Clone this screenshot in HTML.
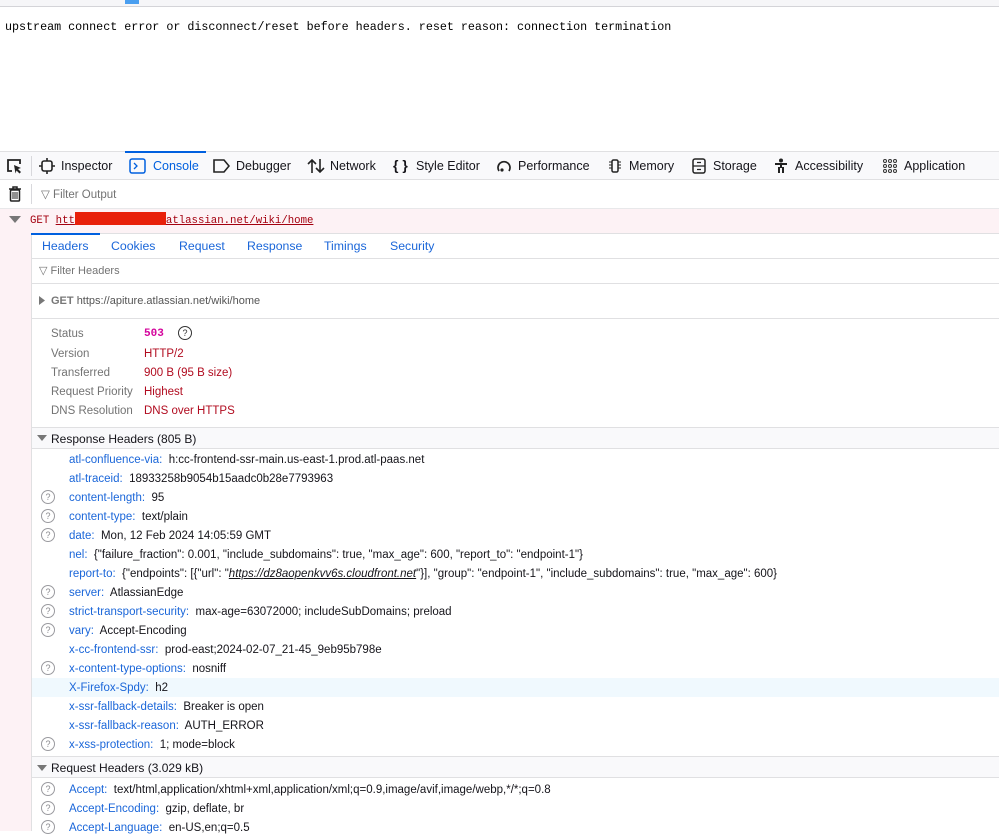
<!DOCTYPE html>
<html><head><meta charset="utf-8"><style>
*{margin:0;padding:0;box-sizing:border-box}
body{width:999px;height:831px;overflow:hidden;background:#fff;font-family:"Liberation Sans",sans-serif;font-size:11.5px;color:#15141a;position:relative}
.a{position:absolute;white-space:nowrap;line-height:16px}
.mono{font-family:"Liberation Mono",monospace}
.k{color:#1a66d9}
.hl{position:absolute;left:31px;right:0;height:1px;background:#e0e0e2}
.q{position:absolute;left:41px;width:14px;height:14px;border:1px solid #9a9a9f;border-radius:50%;font-size:9px;line-height:12px;text-align:center;color:#8a8a8f}
.lab{color:#737373}
.red{color:#b10b1f}
.tb{color:#15141a;font-size:12.5px}
</style></head><body>
<div style="position:absolute;left:0;top:0;width:999px;height:7px;background:#f6f6f8;border-bottom:1px solid #d4d4d8"></div>
<div style="position:absolute;left:125px;top:0;width:14px;height:4px;background:#4a9ff0"></div>
<div class="a mono" style="left:5px;top:19px;font-size:11.7px;color:#000">upstream connect error or disconnect/reset before headers. reset reason: connection termination</div>

<!-- toolbar -->
<div style="position:absolute;left:0;top:151px;width:999px;height:29px;background:#f9f9fb;border-top:1px solid #e0e0e2;border-bottom:1px solid #e0e0e2"></div>
<div style="position:absolute;left:125px;top:151px;width:81px;height:2px;background:#0060df"></div>
<svg style="position:absolute;left:5px;top:157px" width="18" height="18" viewBox="0 0 18 18"><path d="M7 14H3V3h12v4" fill="none" stroke="#222" stroke-width="1.8"/><path d="M9 8l7 3-3 1 3 3-1.5 1.5-3-3-1 3z" fill="#222"/></svg>
<div style="position:absolute;left:31px;top:156px;width:1px;height:20px;background:#d8d8dc"></div>
<svg style="position:absolute;left:39px;top:158px" width="16" height="16" viewBox="0 0 16 16"><rect x="3" y="3" width="10" height="10" rx="2" fill="none" stroke="#222" stroke-width="1.6"/><path d="M8 0v3M8 13v3M0 8h3M13 8h3" stroke="#222" stroke-width="1.6"/></svg>
<div class="a tb" style="left:61px;top:158px">Inspector</div>
<svg style="position:absolute;left:129px;top:158px" width="17" height="16" viewBox="0 0 17 16"><rect x="1" y="1" width="15" height="14" rx="2" fill="none" stroke="#0060df" stroke-width="1.5"/><path d="M5 5l3 3-3 3" fill="none" stroke="#0060df" stroke-width="1.3"/></svg>
<div class="a tb" style="left:153px;top:158px;color:#0060df">Console</div>
<svg style="position:absolute;left:213px;top:159px" width="17" height="14" viewBox="0 0 17 14"><path d="M1 1h10l5 6-5 6H1z" fill="none" stroke="#222" stroke-width="1.6"/></svg>
<div class="a tb" style="left:236px;top:158px">Debugger</div>
<svg style="position:absolute;left:307px;top:158px" width="18" height="16" viewBox="0 0 18 16"><path d="M5 15V2M1 6l4-4 4 4M13 1v13M9 10l4 4 4-4" fill="none" stroke="#222" stroke-width="1.6"/></svg>
<div class="a tb" style="left:330px;top:158px">Network</div>
<div class="a tb" style="left:393px;top:157px;font-size:14px;font-weight:bold">{ }</div>
<div class="a tb" style="left:416px;top:158px">Style Editor</div>
<svg style="position:absolute;left:496px;top:158px" width="16" height="16" viewBox="0 0 16 16"><path d="M3 13A6 6 0 1 1 13 13" fill="none" stroke="#222" stroke-width="1.7"/><circle cx="6" cy="12" r="1.6" fill="#222"/></svg>
<div class="a tb" style="left:518px;top:158px">Performance</div>
<svg style="position:absolute;left:607px;top:158px" width="16" height="16" viewBox="0 0 16 16"><rect x="5" y="2" width="6" height="12" rx="1.5" fill="none" stroke="#222" stroke-width="1.5"/><path d="M2 4h3M2 7h3M2 10h3M11 4h3M11 7h3M11 10h3" stroke="#222"/></svg>
<div class="a tb" style="left:629px;top:158px">Memory</div>
<svg style="position:absolute;left:692px;top:158px" width="14" height="16" viewBox="0 0 14 16"><rect x="1" y="1" width="12" height="14" rx="2" fill="none" stroke="#222" stroke-width="1.5"/><path d="M1 8h12M5 4.5h4M5 11.5h4" stroke="#222" stroke-width="1.3"/></svg>
<div class="a tb" style="left:713px;top:158px">Storage</div>
<svg style="position:absolute;left:773px;top:158px" width="16" height="16" viewBox="0 0 16 16"><circle cx="8" cy="2.5" r="2" fill="#222"/><path d="M2 6h12M8 6v4M6 9v6M10 9v6" stroke="#222" stroke-width="2"/></svg>
<div class="a tb" style="left:795px;top:158px">Accessibility</div>
<svg style="position:absolute;left:882px;top:158px" width="16" height="16" viewBox="0 0 16 16" fill="none" stroke="#333" stroke-width="1"><circle cx="3" cy="3" r="1.5"/><circle cx="8" cy="3" r="1.5"/><circle cx="13" cy="3" r="1.5"/><circle cx="3" cy="8" r="1.5"/><circle cx="8" cy="8" r="1.5"/><circle cx="13" cy="8" r="1.5"/><circle cx="3" cy="13" r="1.5"/><circle cx="8" cy="13" r="1.5"/><circle cx="13" cy="13" r="1.5"/></svg>
<div class="a tb" style="left:904px;top:158px">Application</div>

<!-- filter output -->
<svg style="position:absolute;left:8px;top:186px" width="14" height="16" viewBox="0 0 14 16"><path d="M1 3h12M5 3V1h4v2" fill="none" stroke="#222" stroke-width="1.5"/><rect x="2.5" y="4" width="9" height="11" rx="1" fill="none" stroke="#222" stroke-width="1.5"/><path d="M5 6v7M7 6v7M9 6v7" stroke="#222"/></svg>
<div style="position:absolute;left:31px;top:184px;width:1px;height:20px;background:#d8d8dc"></div>
<div class="a" style="left:41px;top:187px;color:#737373">▽ Filter Output</div>
<div style="position:absolute;left:0;top:208px;width:999px;height:1px;background:#e8e8ea"></div>

<!-- left gutter -->
<div style="position:absolute;left:0;top:209px;width:31px;height:622px;background:#fdf2f5"></div>
<div style="position:absolute;left:31px;top:209px;width:968px;height:24px;background:#fdf2f5"></div>
<svg style="position:absolute;left:9px;top:216px" width="12" height="7" viewBox="0 0 12 7"><path d="M0 0h12L6 7z" fill="#777"/></svg>
<div class="a mono" style="left:30px;top:212px;font-size:10.7px;color:#a4000f">GET <span style="text-decoration:underline">htt<span style="display:inline-block;width:91px;height:13px;vertical-align:-2px;background:#e8200a"></span>atlassian.net/wiki/home</span></div>

<!-- tabs -->
<div style="position:absolute;left:31px;top:233px;width:1px;height:598px;background:#e0e0e2"></div>
<div class="hl" style="top:233px"></div>
<div style="position:absolute;left:31px;top:233px;width:69px;height:2px;background:#0060df"></div>
<div class="a k" style="left:42px;top:238px;font-size:12.3px">Headers</div>
<div class="a k" style="left:111px;top:238px;font-size:12.3px">Cookies</div>
<div class="a k" style="left:179px;top:238px;font-size:12.3px">Request</div>
<div class="a k" style="left:247px;top:238px;font-size:12.3px">Response</div>
<div class="a k" style="left:324px;top:238px;font-size:12.3px">Timings</div>
<div class="a k" style="left:390px;top:238px;font-size:12.3px">Security</div>
<div class="hl" style="top:258px"></div>
<div class="a" style="left:39px;top:263px;color:#737373;font-size:11px">▽ Filter Headers</div>
<div class="hl" style="top:283px"></div>
<svg style="position:absolute;left:39px;top:296px" width="6" height="9" viewBox="0 0 6 9"><path d="M0 0l6 4.5L0 9z" fill="#777"/></svg>
<div class="a" style="left:51px;top:293px;font-size:11px"><b style="color:#777">GET</b> <span style="color:#555">https://apiture.atlassian.net/wiki/home</span></div>
<div class="hl" style="top:318px"></div>

<div class="a lab" style="left:51px;top:326px">Status</div><div class="a mono" style="left:144px;top:326px;color:#d3039b;font-weight:bold;font-size:11px">503</div>
<div class="q" style="left:178px;top:326px;border-color:#333;color:#333">?</div>
<div class="a lab" style="left:51px;top:346px">Version</div><div class="a red" style="left:144px;top:346px">HTTP/2</div>
<div class="a lab" style="left:51px;top:365px">Transferred</div><div class="a red" style="left:144px;top:365px">900 B (95 B size)</div>
<div class="a lab" style="left:51px;top:384px">Request Priority</div><div class="a red" style="left:144px;top:384px">Highest</div>
<div class="a lab" style="left:51px;top:403px">DNS Resolution</div><div class="a red" style="left:144px;top:403px">DNS over HTTPS</div>

<div class="hl" style="top:427px"></div>
<div style="position:absolute;left:32px;top:428px;width:967px;height:20px;background:#f9f9fb"></div>
<svg style="position:absolute;left:37px;top:435px" width="10" height="6" viewBox="0 0 10 6"><path d="M0 0h10L5 6z" fill="#777"/></svg>
<div class="a" style="left:51px;top:431px;font-size:12px">Response Headers (805 B)</div>
<div class="hl" style="top:448px"></div>

<div style="position:absolute;left:32px;top:678px;width:967px;height:19px;background:#f0f9fe"></div>

<div class="a" style="left:69px;top:452px"><span class="k">atl-confluence-via:</span>&nbsp; h:cc-frontend-ssr-main.us-east-1.prod.atl-paas.net</div>
<div class="a" style="left:69px;top:471px"><span class="k">atl-traceid:</span>&nbsp; 18933258b9054b15aadc0b28e7793963</div>
<div class="q" style="top:490px">?</div><div class="a" style="left:69px;top:490px"><span class="k">content-length:</span>&nbsp; 95</div>
<div class="q" style="top:509px">?</div><div class="a" style="left:69px;top:509px"><span class="k">content-type:</span>&nbsp; text/plain</div>
<div class="q" style="top:528px">?</div><div class="a" style="left:69px;top:528px"><span class="k">date:</span>&nbsp; Mon, 12 Feb 2024 14:05:59 GMT</div>
<div class="a" style="left:69px;top:547px"><span class="k">nel:</span>&nbsp; {"failure_fraction": 0.001, "include_subdomains": true, "max_age": 600, "report_to": "endpoint-1"}</div>
<div class="a" style="left:69px;top:566px"><span class="k">report-to:</span>&nbsp; {"endpoints": [{"url": "<i style="text-decoration:underline">https://dz8aopenkvv6s.cloudfront.net</i>"}], "group": "endpoint-1", "include_subdomains": true, "max_age": 600}</div>
<div class="q" style="top:585px">?</div><div class="a" style="left:69px;top:585px"><span class="k">server:</span>&nbsp; AtlassianEdge</div>
<div class="q" style="top:604px">?</div><div class="a" style="left:69px;top:604px"><span class="k">strict-transport-security:</span>&nbsp; max-age=63072000; includeSubDomains; preload</div>
<div class="q" style="top:623px">?</div><div class="a" style="left:69px;top:623px"><span class="k">vary:</span>&nbsp; Accept-Encoding</div>
<div class="a" style="left:69px;top:642px"><span class="k">x-cc-frontend-ssr:</span>&nbsp; prod-east;2024-02-07_21-45_9eb95b798e</div>
<div class="q" style="top:661px">?</div><div class="a" style="left:69px;top:661px"><span class="k">x-content-type-options:</span>&nbsp; nosniff</div>
<div class="a" style="left:69px;top:680px"><span class="k">X-Firefox-Spdy:</span>&nbsp; h2</div>
<div class="a" style="left:69px;top:699px"><span class="k">x-ssr-fallback-details:</span>&nbsp; Breaker is open</div>
<div class="a" style="left:69px;top:718px"><span class="k">x-ssr-fallback-reason:</span>&nbsp; AUTH_ERROR</div>
<div class="q" style="top:737px">?</div><div class="a" style="left:69px;top:737px"><span class="k">x-xss-protection:</span>&nbsp; 1; mode=block</div>

<div class="hl" style="top:756px"></div>
<div style="position:absolute;left:32px;top:757px;width:967px;height:20px;background:#f9f9fb"></div>
<svg style="position:absolute;left:37px;top:765px" width="10" height="6" viewBox="0 0 10 6"><path d="M0 0h10L5 6z" fill="#777"/></svg>
<div class="a" style="left:51px;top:760px;font-size:12px">Request Headers (3.029 kB)</div>
<div class="hl" style="top:777px"></div>
<div class="q" style="top:782px">?</div><div class="a" style="left:69px;top:782px"><span class="k">Accept:</span>&nbsp; text/html,application/xhtml+xml,application/xml;q=0.9,image/avif,image/webp,*/*;q=0.8</div>
<div class="q" style="top:801px">?</div><div class="a" style="left:69px;top:801px"><span class="k">Accept-Encoding:</span>&nbsp; gzip, deflate, br</div>
<div class="q" style="top:820px">?</div><div class="a" style="left:69px;top:820px"><span class="k">Accept-Language:</span>&nbsp; en-US,en;q=0.5</div>
</body></html>
